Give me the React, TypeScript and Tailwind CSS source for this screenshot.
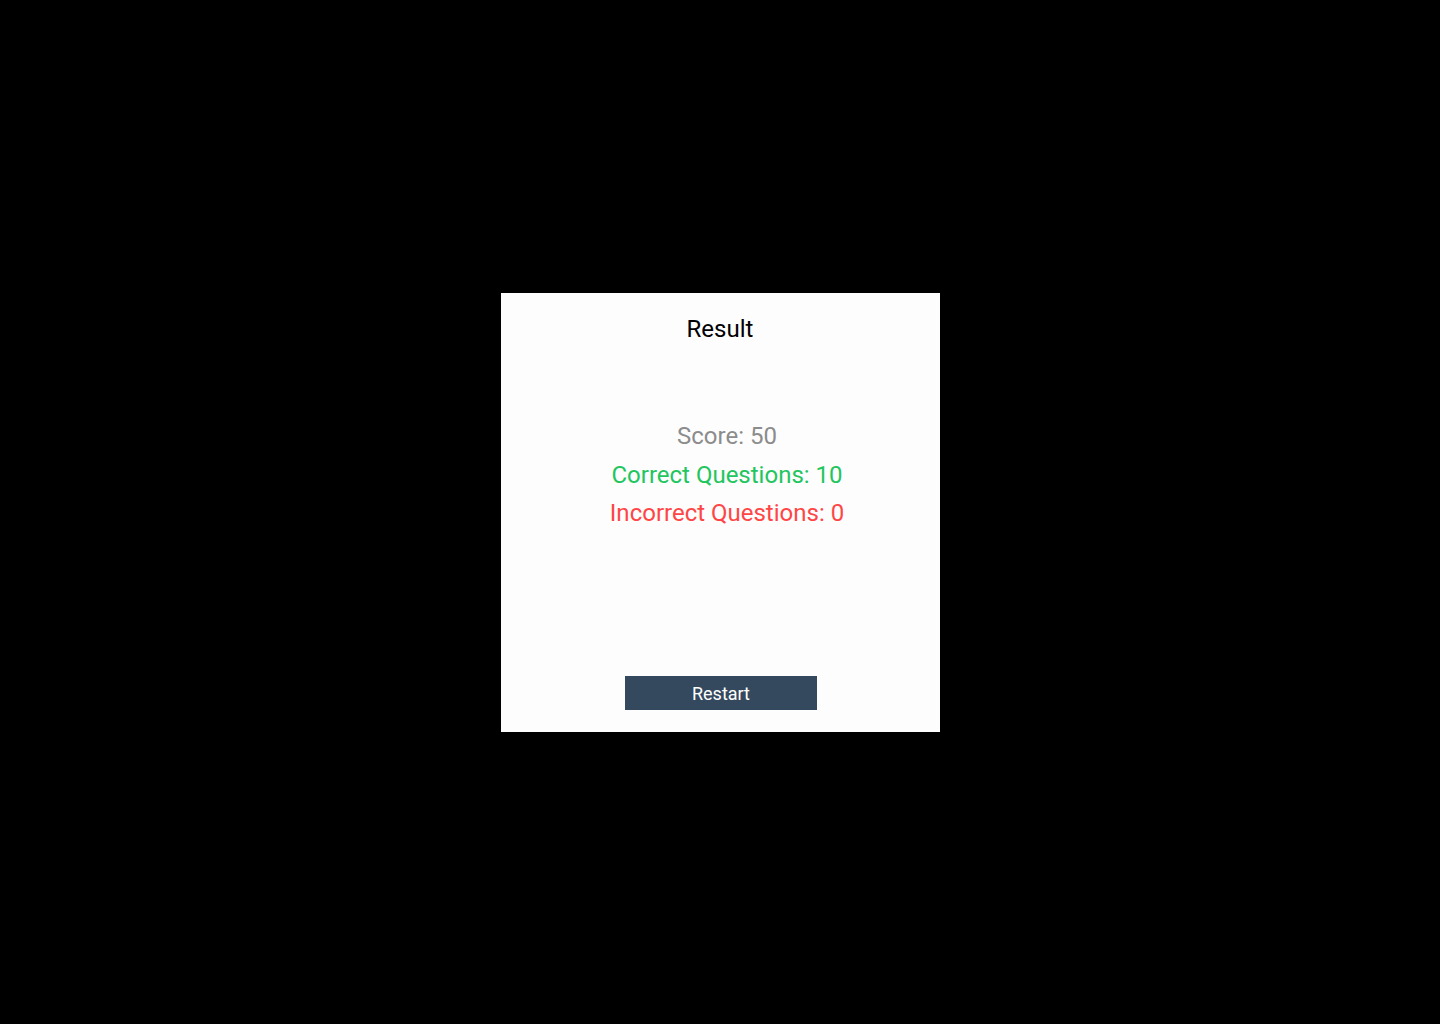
import React from 'react';

const result = { score: 50, correct: 10, incorrect: 0 };

export default function App() {
  return (
    <div className="min-h-screen w-full bg-black flex items-center justify-center" style={{ fontFamily: 'Roboto, "Noto Sans", sans-serif' }}>
      <div className="w-[439px] h-[439px] bg-[#fdfdfd] flex flex-col items-center pt-[20px] pb-[22px]">
        <h1 className="text-[24px] leading-[32px] text-black">Result</h1>
        <ul className="flex-1 flex flex-col items-center pl-[14px] mt-[72px]">
          <li className="text-[24px] leading-[38.5px] text-[#8c8c8c]">Score: {result.score}</li>
          <li className="text-[24px] leading-[38.5px] text-[#22c55e] pt-[1px] mb-[-1px]">Correct Questions: {result.correct}</li>
          <li className="text-[24px] leading-[38.5px] text-[#ff4545]">Incorrect Questions: {result.incorrect}</li>
        </ul>
        <button className="ml-[2px] w-[192px] h-[34px] pt-[2px] bg-[#34495e] text-white text-[18px]">Restart</button>
      </div>
    </div>
  );
}
